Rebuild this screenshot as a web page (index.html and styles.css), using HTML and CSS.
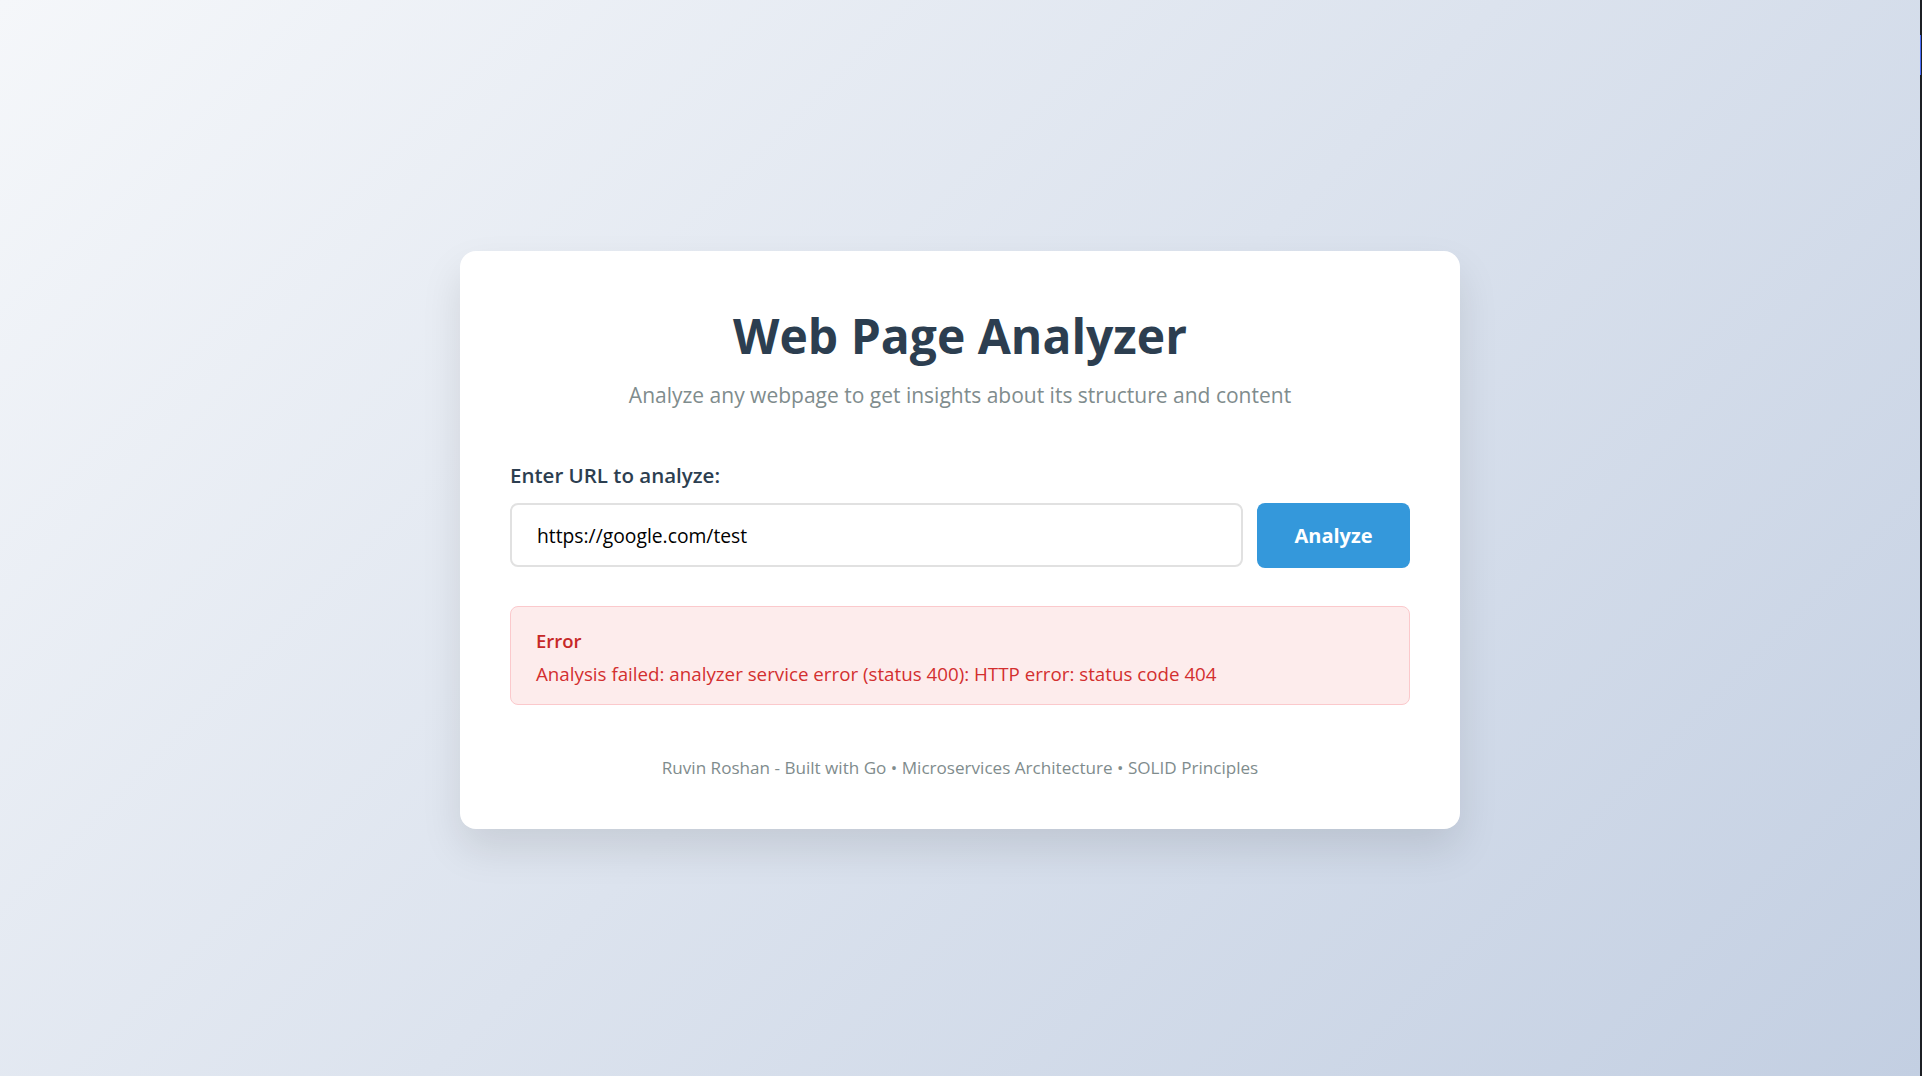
FILE: index.html
```html
<!DOCTYPE html>
<html lang="en">
<head>
<meta charset="utf-8">
<title>Web Page Analyzer</title>
<link rel="stylesheet" href="styles.css">
</head>
<body>
<main class="card">
  <header class="header">
    <h1 class="title">Web Page Analyzer</h1>
    <p class="subtitle">Analyze any webpage to get insights about its structure and content</p>
  </header>
  <form class="form">
    <label class="label" for="url">Enter URL to analyze:</label>
    <div class="row">
      <input class="input" id="url" type="text" value="https://google.com/test">
      <button class="button" type="button">Analyze</button>
    </div>
  </form>
  <div class="error">
    <div class="error-title">Error</div>
    <div class="error-msg">Analysis failed: analyzer service error (status 400): HTTP error: status code 404</div>
  </div>
  <footer class="footer">Ruvin Roshan - Built with Go • Microservices Architecture • SOLID Principles</footer>
</main>
<div class="edge"><div class="edge-thumb"></div></div>
</body>
</html>
```

FILE: styles.css
```css
* { box-sizing: border-box; }
html, body { margin: 0; padding: 0; }
body {
  min-height: 100vh;
  font-family: "Open Sans", "Noto Sans", sans-serif;
  background: linear-gradient(135deg, #f5f7fa 0%, #c3cfe2 100%);
  display: flex;
  align-items: center;
  justify-content: center;
  padding: 4px 2px 0 0;
}
.card {
  width: 1000px;
  background: #ffffff;
  border-radius: 16px;
  box-shadow: 0 20px 40px rgba(0, 0, 0, 0.1);
  padding: 61px 50px 53px;
}
.header { text-align: center; }
.title {
  margin: 0;
  font-size: 48px;
  line-height: 1;
  font-weight: 700;
  color: #2c3e50;
}
.subtitle {
  margin: 25px 0 0;
  font-size: 21px;
  line-height: 1;
  color: #7f8c8d;
}
.form { margin-top: 59px; }
.label {
  display: block;
  font-size: 20.5px;
  line-height: 1;
  font-weight: 600;
  color: #2c3e50;
}
.row {
  display: flex;
  gap: 14px;
  margin-top: 17.5px;
}
.input {
  flex: 1;
  height: 64px;
  border: 2px solid #e1e1e1;
  border-radius: 8px;
  padding: 0 25px;
  font-family: inherit;
  font-size: 19.3px;
  color: #000;
  background: #fff;
  outline: none;
}
.button {
  width: 153px;
  height: 65px;
  border: none;
  border-radius: 8px;
  background: #3498db;
  color: #fff;
  font-family: inherit;
  font-size: 20px;
  font-weight: 700;
}
.error {
  margin-top: 38px;
  background: #fdecec;
  border: 1px solid #fbc9cc;
  border-radius: 8px;
  padding: 24.5px 25px 20.5px;
}
.error-title {
  font-size: 18.5px;
  line-height: 1;
  font-weight: 600;
  color: #c62828;
}
.error-msg {
  margin-top: 15px;
  font-size: 18.75px;
  line-height: 1;
  color: #d32f2f;
}
.footer {
  margin-top: 53.5px;
  text-align: center;
  font-size: 17.1px;
  line-height: 1;
  color: #7f8c8d;
}
.edge {
  position: fixed;
  top: 0;
  right: 0;
  width: 2px;
  height: 100vh;
  background: #1c1f24;
}
.edge-thumb {
  margin-top: 35px;
  width: 1px;
  height: 40px;
  background: #4a6cf7;
}
```
